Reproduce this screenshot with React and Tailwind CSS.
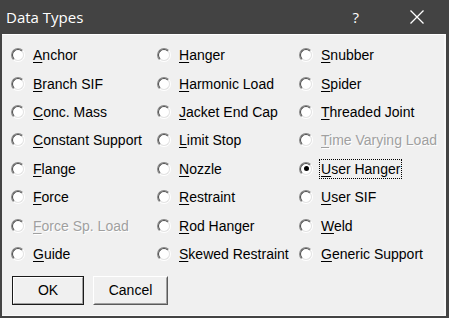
import React from "react";

const items = [
  { label: "Anchor" },
  { label: "Branch SIF" },
  { label: "Conc. Mass" },
  { label: "Constant Support" },
  { label: "Flange" },
  { label: "Force" },
  { label: "Force Sp. Load", disabled: true },
  { label: "Guide" },
  { label: "Hanger" },
  { label: "Harmonic Load" },
  { label: "Jacket End Cap" },
  { label: "Limit Stop" },
  { label: "Nozzle" },
  { label: "Restraint" },
  { label: "Rod Hanger" },
  { label: "Skewed Restraint" },
  { label: "Snubber" },
  { label: "Spider" },
  { label: "Threaded Joint" },
  { label: "Time Varying Load", disabled: true },
  { label: "User Hanger", checked: true },
  { label: "User SIF" },
  { label: "Weld" },
  { label: "Generic Support" },
];

function Radio({ checked }) {
  // classic sunken radio: two rings with light/dark halves
  return (
    <span className="w-[14px] h-[14px] rounded-full border border-t-[#8a8a8a] border-l-[#8a8a8a] border-b-white border-r-white flex items-center justify-center shrink-0">
      <span className="w-[12px] h-[12px] rounded-full border-[1.5px] border-t-[#4a4a4a] border-l-[#4a4a4a] border-b-[#e3e3e3] border-r-[#e3e3e3] bg-white flex items-center justify-center">
        {checked && <span className="w-[5px] h-[5px] rounded-full bg-black" />}
      </span>
    </span>
  );
}

function Option({ label, disabled, checked }) {
  const first = label[0];
  const rest = label.slice(1);
  return (
    <div className="h-[28.43px] flex items-center gap-[8px]">
      <Radio checked={checked} />
      <span
        className={`leading-[16px] whitespace-nowrap ${
          checked ? "outline outline-1 outline-dotted outline-black outline-offset-[1px]" : ""
        } ${disabled ? "text-[#a0a0a0] [text-shadow:1px_1px_0_#ffffff]" : "text-black"}`}
      >
        <span className="underline underline-offset-[2px]">{first}</span>
        {rest}
      </span>
    </div>
  );
}

function App() {
  return (
    <div className="w-[449px] h-[318px] bg-[#434343] flex flex-col overflow-hidden">
      {/* Title bar */}
      <div
        className="h-[34px] flex items-center text-white shrink-0"
        style={{ fontFamily: '"Open Sans", "Noto Sans", sans-serif' }}
      >
        <span className="ml-[6px] text-[15px]">Data Types</span>
        <span className="ml-auto text-[15px] mr-[50px]">?</span>
        <svg width="16" height="16" viewBox="0 0 16 16" className="mr-[24px]">
          <path d="M1.5 1.5 L14.5 14.5 M14.5 1.5 L1.5 14.5" stroke="#ffffff" strokeWidth="1.3" />
        </svg>
      </div>

      {/* Body */}
      <div
        className="flex-1 ml-[2px] mr-[3px] mb-[2px] bg-[#f0f0f0] border-t border-t-white border-r-2 border-r-[#f8f8f8] border-b border-b-[#fafafa] pl-[9px] pt-[6px] text-[14px]"
        style={{ fontFamily: '"Liberation Sans", Arial, sans-serif' }}
      >
        <div className="grid grid-cols-[146px_142px_1fr] grid-rows-[repeat(8,28.43px)] grid-flow-col">
          {items.map((it) => (
            <Option key={it.label} {...it} />
          ))}
        </div>

        <div className="flex gap-[9px] mt-[8px] ml-[1px]">
          <button className="w-[72px] h-[29px] border border-[#1a1a1a] bg-[#f0f0f0] p-0">
            <span className="flex items-center justify-center w-full h-full border border-t-white border-l-white border-b-[#a0a0a0] border-r-[#a0a0a0]">
              OK
            </span>
          </button>
          <button className="w-[75px] h-[29px] bg-[#f0f0f0] p-0 border border-t-white border-l-white border-b-[#5a5a5a] border-r-[#5a5a5a]">
            <span className="flex items-center justify-center w-full h-full border border-t-[#f0f0f0] border-l-[#f0f0f0] border-b-[#a0a0a0] border-r-[#a0a0a0]">
              Cancel
            </span>
          </button>
        </div>
      </div>
    </div>
  );
}

export default App;
